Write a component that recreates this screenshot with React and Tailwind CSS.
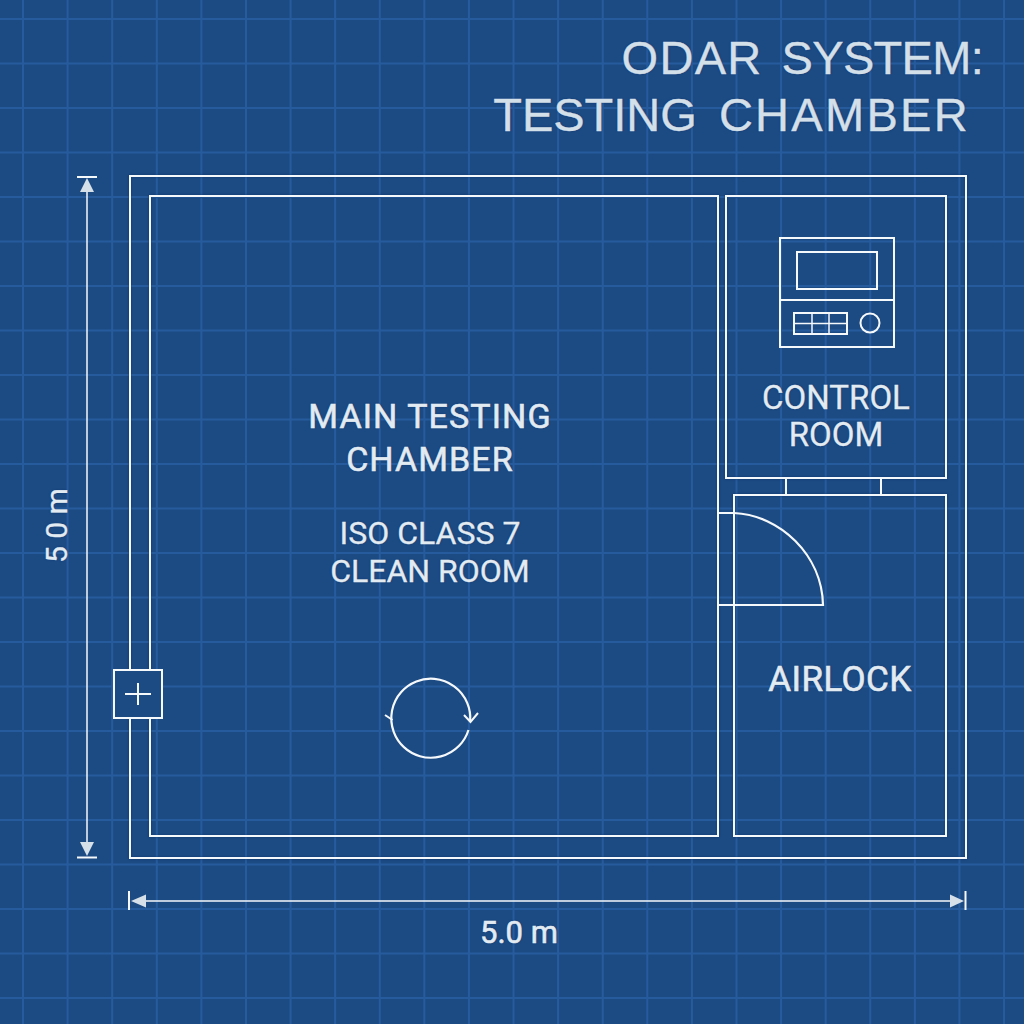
// App.jsx
import React from 'react';

const LINE = '#f6f9fb';
const HEAD = '#d5e0e9';
const labelClass = "text-[#e3ebf2] font-['Roboto',sans-serif] text-center [-webkit-text-stroke:0.3px_#e3ebf2] [text-shadow:0_0_2px_#0f356a]";
const boldLabelClass = "text-[#e3ebf2] font-['Roboto',sans-serif] text-center [-webkit-text-stroke:0.6px_#e3ebf2] [text-shadow:0_0_2px_#0f356a]";
const wallClass = "border-2 border-[#f6f9fb] shadow-[0_0_2px_#0f356a,inset_0_0_2px_#0f356a]";

function ControlPanel() {
    return (
        <svg width="118" height="113" viewBox="778 236 118 113" fill="none" stroke={LINE} strokeWidth="2" className="block ml-[2px]">
            <rect x="780" y="238" width="114" height="109" />
            <rect x="797" y="252" width="80" height="37" />
            <line x1="780" y1="300" x2="894" y2="300" />
            <rect x="794" y="313" width="53" height="21" />
            <line x1="794" y1="323.5" x2="847" y2="323.5" strokeWidth="1.5" />
            <line x1="812" y1="313" x2="812" y2="334" strokeWidth="1.5" />
            <line x1="829" y1="313" x2="829" y2="334" strokeWidth="1.5" />
            <circle cx="870" cy="323" r="9.5" />
        </svg>
    );
}

// everything that sits over the walls: door swing, dimensions, fan, connectors
function Overlay() {
    return (
        <svg width="1024" height="1024" viewBox="0 0 1024 1024" fill="none" stroke={LINE} strokeWidth="2" className="absolute inset-0">
            {/* connectors control room -> airlock */}
            <line x1="786" y1="478" x2="786" y2="495" />
            <line x1="881" y1="478" x2="881" y2="495" />

            {/* door */}
            <path d="M719 513 H734 C780 515 822 555 823 605 H719" strokeWidth="2.2" />

            {/* fan */}
            <path d="M468.5 730 A39.5 39.5 0 1 1 470.2 721" strokeWidth="2.2" />
            <path d="M464 715 L470.5 722 L478 713" />
            <path d="M385 715 L392.5 720" />

            {/* height dimension */}
            <line x1="87" y1="190" x2="87" y2="845" strokeWidth="1.5" />
            <line x1="77" y1="177" x2="97" y2="177" />
            <line x1="77" y1="857.5" x2="97" y2="857.5" />
            <path d="M87 178 L94 192 H80 Z" fill={HEAD} stroke="none" />
            <path d="M87 856 L94 842 H80 Z" fill={HEAD} stroke="none" />

            {/* width dimension */}
            <line x1="143" y1="901" x2="952" y2="901" strokeWidth="1.5" />
            <line x1="129" y1="891" x2="129" y2="910" />
            <line x1="965.5" y1="891" x2="965.5" y2="910" />
            <path d="M131 901 L146 894.5 V907.5 Z" fill={HEAD} stroke="none" />
            <path d="M964 901 L950 894.5 V907.5 Z" fill={HEAD} stroke="none" />
        </svg>
    );
}

const App = () => {
    return (
        <div className="relative w-[1024px] h-[1024px] overflow-hidden bg-[#1c4a83] bg-[linear-gradient(to_right,#265c9e_1.5px,transparent_2px),linear-gradient(to_bottom,#265c9e_1.5px,transparent_2px)] bg-[size:44.6px_44.5px] bg-[position:22px_18px]">
            {/* title */}
            <div className="h-[175px] pt-[29px] font-['Liberation_Sans',sans-serif] text-[47px] leading-[57px] text-[#d3dfe9] [-webkit-text-stroke:0.4px_#d3dfe9] [text-shadow:0_0_2px_#0f356a]">
                <div className="flex justify-end gap-[19px] pr-[41px]">
                    <span className="tracking-[1.3px]">ODAR</span>
                    <span className="tracking-[-0.7px]">SYSTEM:</span>
                </div>
                <div className="flex justify-end gap-[22px] pr-[54px]">
                    <span className="tracking-[0px]">TESTING</span>
                    <span className="tracking-[2.3px]">CHAMBER</span>
                </div>
            </div>

            {/* plan */}
            <div className={`${wallClass} ml-[129px] w-[838px] h-[684px] pl-[18px] pt-[18px] flex`}>
                <div className={`${wallClass} w-[570px] h-[642px] flex flex-col items-center pt-[198px] pr-[8px]`}>
                    <div className={`${boldLabelClass} text-[34px] leading-[43px] tracking-[1.1px]`}>
                        MAIN TESTING<br />CHAMBER
                    </div>
                    <div className={`${labelClass} text-[32px] leading-[38px] mt-[33px]`}>
                        ISO CLASS 7<br />CLEAN ROOM
                    </div>
                </div>
                <div className="ml-[6px] w-[222px] h-[642px] flex flex-col">
                    <div className={`${wallClass} h-[284px] flex flex-col items-center pt-[39px]`}>
                        <ControlPanel />
                        <div className={`${labelClass} text-[33px] leading-[37px] mt-[30px]`}>
                            CONTROL<br />ROOM
                        </div>
                    </div>
                    <div className={`${wallClass} ml-[8px] mt-[15px] h-[343px] flex items-center justify-center pt-[29px]`}>
                        <div className={`${boldLabelClass} text-[35px] tracking-[0.4px]`}>AIRLOCK</div>
                    </div>
                </div>
            </div>

            <Overlay />

            {/* wall sensor */}
            <div className="absolute left-[113px] top-[669px] w-[50px] h-[50px] border-2 border-[#f6f9fb] bg-[#1c4a83] flex items-center justify-center">
                <svg width="28" height="24" viewBox="0 0 28 24" fill="none" stroke={LINE} strokeWidth="2">
                    <line x1="1" y1="12" x2="27" y2="12" />
                    <line x1="14" y1="1" x2="14" y2="23" />
                </svg>
            </div>

            {/* dimension labels */}
            <div className={`${labelClass} absolute left-[41px] top-[488px] h-[76px] text-[30px] leading-[32px] whitespace-nowrap [writing-mode:vertical-rl] rotate-180`}>
                5 0 m
            </div>
            <div className={`${boldLabelClass} absolute left-[480px] top-[915px] text-[31px] leading-[36px] whitespace-nowrap`}>
                5.0 m
            </div>
        </div>
    );
};

export default App;
